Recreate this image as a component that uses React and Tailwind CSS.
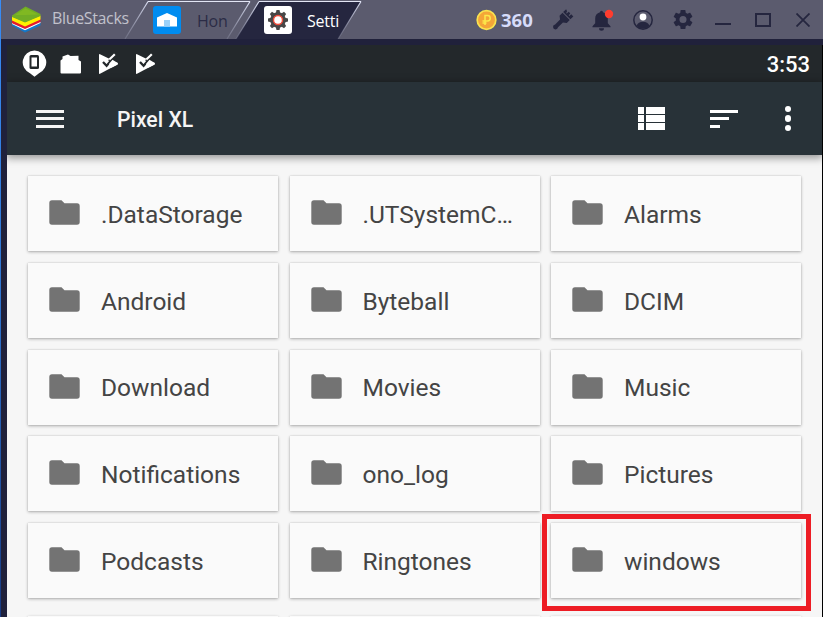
import React from "react";

const folders = [
  ".DataStorage", ".UTSystemC…", "Alarms",
  "Android", "Byteball", "DCIM",
  "Download", "Movies", "Music",
  "Notifications", "ono_log", "Pictures",
  "Podcasts", "Ringtones", "windows",
  "", "", "",
];

const gearPath =
  "M19.4 13c.04-.3.1-.65.1-1s-.03-.68-.1-1l2.15-1.65c.2-.15.24-.42.12-.64l-2-3.46c-.12-.22-.4-.3-.6-.22l-2.5 1c-.52-.4-1.07-.73-1.7-.98l-.37-2.65A.49.49 0 0 0 14 2h-4c-.25 0-.46.18-.5.42l-.37 2.65c-.6.25-1.17.6-1.7.98l-2.48-1c-.23-.1-.5 0-.6.22l-2 3.46c-.14.22-.08.5.1.64L4.57 11c-.04.32-.07.66-.07 1s.03.68.07 1l-2.12 1.65c-.18.15-.24.42-.1.64l2 3.46c.1.22.37.3.6.22l2.48-1c.53.4 1.08.73 1.7.98l.37 2.65c.04.24.25.4.5.4h4c.25 0 .46-.16.5-.4l.37-2.65c.6-.25 1.17-.6 1.7-.98l2.5 1c.22.1.48 0 .6-.22l2-3.46c.12-.22.07-.5-.12-.64L19.4 13z";

function Logo() {
  return (
    <svg className="h-[27px] w-[31px] shrink-0" viewBox="0 0 31 27">
      <path d="M1 16v3.500L14 26.500l15.500-7V15L14 21z" fill="#1477c8" />
      <path d="M1 14v3.500L14 23.500l15.500-7V13L14 19z" fill="#e51b2b" />
      <path d="M1 17.200v.9L14 24.200l15.500-7.200v-.9L14 23z" fill="#fff" />
      <path d="M1 10.500v4L14 20.500l15.500-7V9.500L14 16z" fill="#fff100" />
      <path d="M1 9.500L14.500.5 29.500 8v2L14 16.500 1 11z" fill="#71ad25" />
      <path d="M4 9L14.500 2.200 27 8.500 14.500 9z" fill="#8fc31f" opacity=".5" />
    </svg>
  );
}

function Tab({ active, icon, label }) {
  return (
    <div className="relative flex h-[39px] w-[127px] shrink-0 items-start">
      <svg className="absolute inset-0 h-[39px] w-[127px]" viewBox="0 0 127 39">
        <defs>
          <linearGradient id={active ? "edgeA" : "edgeB"} x1="0" y1="0" x2="0" y2="1">
            <stop offset="0" stopColor="#dce0f4" />
            <stop offset="1" stopColor="#a4a7bd" stopOpacity=".25" />
          </linearGradient>
        </defs>
        <path d="M1 39L24 1.500h102L103 39z" fill={active ? "#25263f" : "#5b5b6e"} />
        <path
          d="M1 39L24 1.500M126 1.500L103 39"
          fill="none"
          stroke={active ? "url(#edgeA)" : "url(#edgeB)"}
          strokeWidth="1.200"
        />
        <path d="M24 1.500h102" stroke="#e3e6f5" strokeWidth="1.200" />
      </svg>
      <div className="relative ml-[29px] mt-[6px]">{icon}</div>
      <div
        className={
          "relative mt-[10px] h-[24px] w-[34px] whitespace-nowrap font-['Open_Sans','Noto_Sans',sans-serif] text-[16px] leading-[22px] tracking-[-0.2px] " +
          (active ? "ml-[15px] text-white" : "ml-[16px] text-[#2b2c46]")
        }
      >
        {label}
      </div>
    </div>
  );
}

function HomeIcon() {
  return (
    <svg className="block h-[28px] w-[28px]" viewBox="0 0 28 28">
      <rect width="28" height="28" rx="3" fill="#008cf0" />
      <path d="M4 11.500L14 7 24 11.500v9H4z" fill="#fff" />
      <path d="M11 14h6v6.500h-6z" fill="#99d1f9" />
    </svg>
  );
}

function SettingsIcon() {
  return (
    <svg className="block h-[28px] w-[28px]" viewBox="0 0 28 28">
      <rect width="28" height="28" rx="3" fill="#fff" />
      <g fill="#474747" transform="translate(14 14)">
        <circle r="7.800" />
        {[0, 45, 90, 135].map((a) => (
          <path key={a} d="M-2.200-7L-1.500-10H1.500L2.200-7V7L1.500 10H-1.500L-2.200 7z" transform={"rotate(" + a + ")"} />
        ))}
        <circle r="4.500" fill="#fff" stroke="#ee4c3a" strokeWidth="1.400" />
      </g>
    </svg>
  );
}

function TitleBar() {
  return (
    <header className="flex h-[39px] w-full shrink-0 bg-[#5b5b6e]">
      <div className="flex w-[123px] shrink-0 pl-[10px] pt-[6px]">
        <Logo />
        <span className="ml-[10px] mt-[1px] whitespace-nowrap font-['Open_Sans','Noto_Sans',sans-serif] text-[16px] leading-[22px] tracking-[-0.35px] text-[#c1c1cb]">
          BlueStacks
        </span>
      </div>
      <Tab icon={<HomeIcon />} label="Hon" />
      <div className="-ml-[16px]">
        <Tab active icon={<SettingsIcon />} label="Setti" />
      </div>
      <div className="ml-auto flex h-[39px] items-center">
        <svg className="h-[22px] w-[22px]" viewBox="0 0 22 22">
          <circle cx="11.500" cy="11" r="9.300" fill="#f4a638" stroke="#f9e34f" strokeWidth="1.700" />
          <path d="M10 16V6.500h2.500a2.700 2.700 0 0 1 0 5.400H7.500M7.500 14h4" fill="none" stroke="#fbe94b" strokeWidth="1.500" />
        </svg>
        <span className="ml-[4px] mt-[1px] w-[34px] font-['Open_Sans','Noto_Sans',sans-serif] text-[18.500px] font-bold leading-[22px] text-[#d6dcfa]">
          360
        </span>
        <svg className="ml-[17px] h-[22px] w-[22px]" viewBox="0 0 22 22" fill="#25263f">
          <g transform="translate(10.500 11) rotate(45) scale(.93)">
            <path d="M-5.500-6.500V-11l2.300.8.6 2h1V-11h2.400l.5 2.800h1V-11h3.200v4.500z" />
            <path d="M-5.500-5.500h11V-1L2.200 1.500V9A2.700 2.700 0 1 1-2.200 9V1.500L-5.500-1z" />
          </g>
        </svg>
        <svg className="ml-[17px] h-[24px] w-[23px]" viewBox="0 0 23 24">
          <path d="M10.500 2.800a1.500 1.500 0 0 1 1.500 1.500c3.200.8 4.800 3.300 4.800 6.200v4.800l2.700 3v1H1.500v-1l2.700-3v-4.800c0-2.900 1.600-5.400 4.800-6.200a1.500 1.500 0 0 1 1.500-1.500zM8 20.300h5a2.500 2.500 0 0 1-5 0z" fill="#25263f" />
          <circle cx="18" cy="6" r="4.200" fill="#ff3c2e" />
        </svg>
        <svg className="ml-[18px] h-[22px] w-[22px]" viewBox="0 0 22 22">
          <circle cx="11" cy="11" r="9.200" fill="none" stroke="#25263f" strokeWidth="1.500" />
          <path d="M4.500 17c1-3 3.500-4.200 6.500-4.200s5.500 1.200 6.500 4.200a9 9 0 0 1-13 0z" fill="#25263f" />
          <circle cx="11" cy="8" r="3.400" fill="#fff" />
        </svg>
        <svg className="ml-[18px] h-[22px] w-[22px]" viewBox="0.5 1.500 23 22">
          <path d={gearPath + "M12 8.300a3.700 3.700 0 1 0 0 7.400 3.700 3.700 0 0 0 0-7.400z"} fill="#25263f" fillRule="evenodd" />
        </svg>
        <div className="ml-[21px] mt-[9px] h-[2px] w-[16px] bg-[#25263f]" />
        <div className="ml-[24px] h-[14px] w-[16px] border-2 border-[#25263f]" />
        <svg className="ml-[25px] mr-[13px] h-[14px] w-[14px]" viewBox="0 0 14 14">
          <path d="M.5.5l13 13M13.500.5l-13 13" stroke="#25263f" strokeWidth="1.800" />
        </svg>
      </div>
    </header>
  );
}

function PlayCheck() {
  return (
    <svg className="h-[22px] w-[21px]" viewBox="0 0 21 22">
      <path d="M2 1.800Q2 .8 3 1.200L20 9.600q1.600 1.100 0 2.100L3 20.800q-1 .4-1-.6z" fill="#fff" />
      <path d="M11 7.500L16 2h4v7.500z" fill="#23282b" />
      <path d="M6 9l3.600 3.800L16 5.300" fill="none" stroke="#23282b" strokeWidth="2.300" />
      <path d="M12.300 6.500L17.800 1.300" stroke="#fff" strokeWidth="2.200" />
      <path d="M12 11l3.500-4.200 4.800 2.900q1 1 0 2l-6 3z" fill="#fff" />
    </svg>
  );
}

function StatusBar() {
  return (
    <div className="flex h-[37px] shrink-0 items-center bg-[#23282b] pl-[15px] pr-[12px]">
      <svg className="h-[27px] w-[25px]" viewBox="0 0 25 27">
        <path d="M12.500.5a11.800 11.800 0 0 1 4.500 22.700L12.500 26.700 8 23.200A11.800 11.800 0 0 1 12.500.5z" fill="#fff" />
        <rect x="7.500" y="5" width="9.500" height="14" rx="1.500" fill="#23282b" />
        <rect x="9.500" y="7.500" width="5.500" height="9" fill="#fff" />
      </svg>
      <svg className="ml-[13px] h-[20px] w-[22px]" viewBox="0 0 22 20">
        <path d="M.5 18.500V6.500l2-1.500V2.500L8 .5l2.500 1.500 8-.2v4.200l2.500 1.500v11q0 1-1 1H1.500q-1 0-1-1z" fill="#fff" />
      </svg>
      <div className="ml-[15px] flex gap-[16px]">
        <PlayCheck />
        <PlayCheck />
      </div>
      <span className="ml-auto mt-[2px] font-[Roboto,sans-serif] text-[22px] font-medium leading-[26px] text-white">3:53</span>
    </div>
  );
}

function AppBar() {
  return (
    <div className="relative flex h-[73px] shrink-0 items-center bg-[#283238] pl-[29px] pr-[31px] shadow-[0_2px_8px_1px_rgba(0,0,0,0.4)]">
      <div className="flex w-[28px] flex-col gap-[4.500px]">
        <div className="h-[3px] bg-[#f5f5f5]" />
        <div className="h-[3px] bg-[#f5f5f5]" />
        <div className="h-[3px] bg-[#f5f5f5]" />
      </div>
      <span className="ml-[53px] mt-[2px] font-[Roboto,sans-serif] text-[21.200px] font-medium leading-[28px] text-[#f5f5f5]">
        Pixel XL
      </span>
      <div className="ml-auto mr-px grid grid-cols-[6px_19px] gap-[1.500px]">
        <div className="h-[6.500px] bg-white" /><div className="h-[6.500px] bg-white" />
        <div className="h-[6.500px] bg-white" /><div className="h-[6.500px] bg-white" />
        <div className="h-[6.500px] bg-white" /><div className="h-[6.500px] bg-white" />
      </div>
      <div className="ml-[44px] flex w-[28px] flex-col gap-[4.500px]">
        <div className="h-[3px] w-[28px] bg-white" />
        <div className="h-[3px] w-[19px] bg-white" />
        <div className="h-[3px] w-[10px] bg-white" />
      </div>
      <div className="ml-[47px] flex flex-col gap-[3px]">
        <div className="h-[6.400px] w-[6.400px] rounded-full bg-white" />
        <div className="h-[6.400px] w-[6.400px] rounded-full bg-white" />
        <div className="h-[6.400px] w-[6.400px] rounded-full bg-white" />
      </div>
    </div>
  );
}

function FolderCard({ name, highlighted }) {
  return (
    <div className="relative flex h-[75px] items-center bg-[#fafafa] pl-[21px] shadow-[0_1px_3px_rgba(0,0,0,0.3),0_0_1px_rgba(0,0,0,0.2)]">
      <svg className="mb-[2px] h-[25px] w-[31px] shrink-0" viewBox="0 0 31 25">
        <path d="M3 .3h9.500l3 3H28q2.700 0 2.700 2.700v16q0 2.700-2.700 2.700H3Q.3 24.700.3 22V3Q.3.300 3 .3z" fill="#737373" />
      </svg>
      <span className="ml-[21px] whitespace-nowrap pt-[2px] font-[Roboto,sans-serif] text-[24.500px] leading-[30px] text-[#444]">
        {name}
      </span>
      {highlighted && (
        <div className="absolute -left-[9px] -top-[9px] h-[97px] w-[269px] border-[5px] border-[#ed1c24]" />
      )}
    </div>
  );
}

export default function App() {
  return (
    <div className="flex h-[617px] w-[823px] flex-col overflow-hidden bg-[#20213b]">
      <div className="flex min-h-0 flex-1">
        <div className="w-px shrink-0 bg-linear-to-b from-[#378cf7] via-[#2e73cf] to-[#173a83]" />
        <div className="flex min-w-0 flex-1 flex-col">
          <TitleBar />
          <div className="flex min-h-0 flex-1 pl-[6px] pt-[6px]">
            <main className="flex min-w-0 flex-1 flex-col overflow-hidden border-r border-black bg-[#f6f6f6]">
              <StatusBar />
              <AppBar />
              <div className="grid shrink-0 grid-cols-[250px_250px_250px] gap-x-[11.500px] gap-y-[11.700px] pl-[21px] pt-[21.400px]">
                {folders.map((name, i) =>
                  name ? (
                    <FolderCard key={i} name={name} highlighted={name === "windows"} />
                  ) : (
                    <div key={i} className="mt-[6px] h-[75px] bg-[#fafafa] shadow-[0_1px_3px_rgba(0,0,0,0.3)]" />
                  )
                )}
              </div>
            </main>
          </div>
        </div>
      </div>
    </div>
  );
}
